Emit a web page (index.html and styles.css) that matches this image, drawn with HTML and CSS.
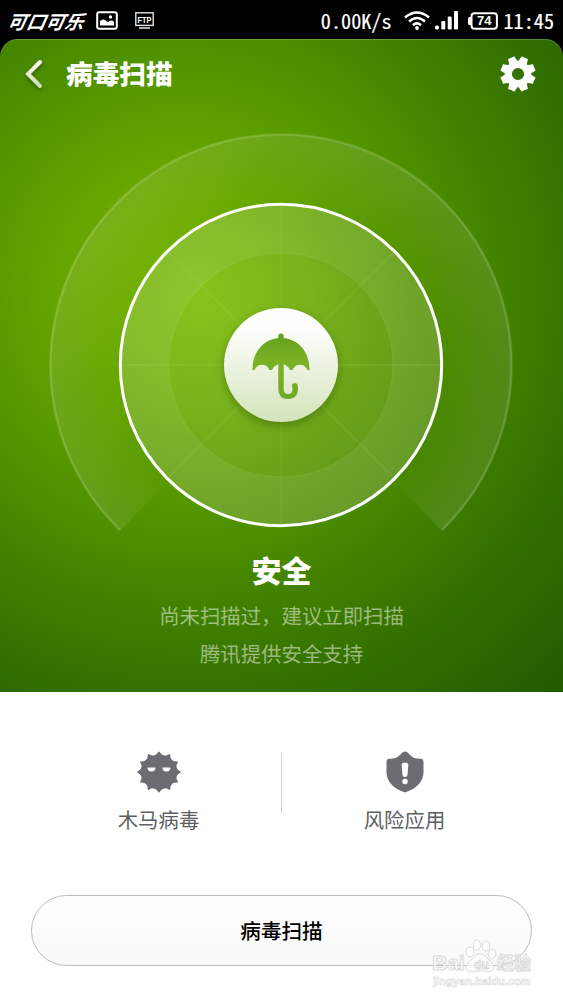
FILE: index.html
```html
<!DOCTYPE html>
<html lang="zh-CN">
<head>
  <meta charset="utf-8">
  <title>病毒扫描</title>
  <link rel="stylesheet" href="styles.css">
</head>
<body>
<div class="statusbar">
  <span class="carrier">可口可乐</span>
  <svg class="icon-photo" width="22" height="19" viewBox="0 0 22 19">
    <rect x="1.2" y="1.2" width="19.6" height="16.6" rx="2" fill="none" stroke="#fff" stroke-width="2"/>
    <path d="M4 14.500V10Q6.500 7.500 9 9Q11 11.500 13 10.500Q16 8.500 18 11V14.500Z" fill="#fff"/>
    <circle cx="14.500" cy="6" r="1.700" fill="#fff"/>
  </svg>
  <svg class="icon-ftp" width="19" height="18" viewBox="0 0 19 18">
    <rect x=".8" y=".8" width="17.400" height="12.600" fill="none" stroke="#e4e4e4" stroke-width="1.400"/>
    <rect x="4" y="15" width="11" height="2" fill="#aaa"/>
    <text x="9.500" y="10.700" text-anchor="middle" textLength="14" lengthAdjust="spacingAndGlyphs" class="ftp-text">FTP</text>
  </svg>
  <div class="status-right">
    <span class="mono">0.00K/s</span>
    <svg class="icon-wifi" width="26" height="19" viewBox="0 0 26 19">
      <g fill="none" stroke="#fff" stroke-width="2.500">
        <path d="M1 6.500Q13-3.500 25 6.500"/>
        <path d="M5 10.500Q13 3.500 21 10.500"/>
        <path d="M9 14.200Q13 10.600 17 14.200"/>
      </g>
      <circle cx="13" cy="17" r="1.900" fill="#fff"/>
    </svg>
    <svg class="icon-signal" width="23" height="19" viewBox="0 0 23 19" fill="#fff">
      <rect x="0" y="14.500" width="4" height="4" rx="1.500"/>
      <rect x="6.300" y="10" width="4" height="8.500" rx="1.300"/>
      <rect x="12.700" y="5.500" width="4" height="13" rx="1.300"/>
      <rect x="19" y="0" width="4" height="18.500" rx="1.300"/>
    </svg>
    <svg class="icon-battery" width="30" height="18" viewBox="0 0 30 18">
      <rect x="3.500" y="1.200" width="25.400" height="15.600" rx="3" fill="none" stroke="#fff" stroke-width="2"/>
      <rect x="0" y="5" width="4" height="8" rx="1.500" fill="#fff"/>
      <text x="16.200" y="13.400" text-anchor="middle" textLength="14.500" lengthAdjust="spacingAndGlyphs" class="battery-text">74</text>
    </svg>
    <span class="mono">11:45</span>
  </div>
</div>

<div class="hero">
  <div class="titlebar">
    <svg class="icon-back" width="20" height="32" viewBox="0 0 20 32">
      <defs>
        <linearGradient id="backFill" x1="0" y1="0" x2="0" y2="1">
          <stop offset="0" stop-color="#fff"/>
          <stop offset="1" stop-color="#c9dbb8"/>
        </linearGradient>
      </defs>
      <path d="M17 4L5 16L17 28" fill="none" stroke="url(#backFill)" stroke-width="4" stroke-linecap="round"/>
    </svg>
    <h1>病毒扫描</h1>
    <svg class="icon-gear" width="36" height="36" viewBox="-18 -18 36 36">
      <defs>
        <path id="tooth" d="M-6-10L-4.300-13L-3.500-17.200Q-3.300-17.800-2.700-17.700Q0-17 2.700-17.700Q3.300-17.800 3.500-17.200L4.300-13L6-10Z"/>
      </defs>
      <circle r="9.600" fill="none" stroke="#fff" stroke-width="7"/>
      <g fill="#fff">
        <use href="#tooth" transform="rotate(22.500)"/>
        <use href="#tooth" transform="rotate(67.500)"/>
        <use href="#tooth" transform="rotate(112.500)"/>
        <use href="#tooth" transform="rotate(157.500)"/>
        <use href="#tooth" transform="rotate(202.500)"/>
        <use href="#tooth" transform="rotate(247.500)"/>
        <use href="#tooth" transform="rotate(292.500)"/>
        <use href="#tooth" transform="rotate(337.500)"/>
      </g>
    </svg>
  </div>

  <svg class="radar" width="466" height="412" viewBox="-233 -233 466 412">
    <defs>
      <radialGradient id="sweep" gradientUnits="userSpaceOnUse" cx="0" cy="0" r="231">
        <stop offset=".7" stop-color="#fff" stop-opacity="0"/>
        <stop offset="1" stop-color="#fff" stop-opacity=".1"/>
      </radialGradient>
      <radialGradient id="inner" gradientUnits="userSpaceOnUse" cx="-80" cy="-65" r="260">
        <stop offset="0" stop-color="#88c21c"/>
        <stop offset=".4" stop-color="#7ab31b"/>
        <stop offset="1" stop-color="#5c9418"/>
      </radialGradient>
      <linearGradient id="disc" x1="0" y1="0" x2="0" y2="1">
        <stop offset="0" stop-color="#fff"/>
        <stop offset=".2" stop-color="#fcfdfa"/>
        <stop offset="1" stop-color="#d3e4ba"/>
      </linearGradient>
      <linearGradient id="umbrella" x1="0" y1="0" x2="0" y2="1">
        <stop offset="0" stop-color="#65a01f"/>
        <stop offset=".45" stop-color="#7bb124"/>
        <stop offset="1" stop-color="#70a92a"/>
      </linearGradient>
    </defs>
    <!-- outer sweep, open at the bottom -->
    <path d="M-161 166A231 231 0 1 1 161 166L114 116A162 162 0 1 0-114 116Z" fill="url(#sweep)"/>
    <path d="M-161 165A230.500 230.500 0 1 1 161 165" fill="none" stroke="#fff" stroke-opacity=".15" stroke-width="2.600"/>
    <!-- dial -->
    <circle r="161" fill="url(#inner)"/>
    <circle r="136.500" fill="none" stroke="#fff" stroke-opacity=".07" stroke-width="49"/>
    <circle r="112" fill="none" stroke="#fff" stroke-opacity=".08"/>
    <path d="M0-160V160M-160 0H160M-113-113L113 113M113-113L-113 113" stroke="#fff" stroke-opacity=".08" stroke-width="1.300"/>
    <circle r="160.700" fill="none" stroke="#fff" stroke-width="3"/>
    <circle class="disc" r="57" fill="url(#disc)"/>
    <path d="M-28.500 5C-28.500-14-17-25.500-2.700-27V-29Q-2.700-31.500 0-31.500Q2.700-31.500 2.700-29V-27C17-25.500 28.500-14 28.500 5H26.500C24-2 14-2 11.500 5H9Q7 1 2.700-1V24Q2.700 29 7 29Q11.500 29 11.500 24L11 21Q10.500 18.500 13.700 18Q17 18 17 23Q17 34 7 34Q-2.700 34-2.700 24V-1Q-7 1-9 5H-11.500C-14-2-24-2-26.500 5Z" fill="url(#umbrella)"/>
  </svg>

  <h2>安全</h2>
  <p>尚未扫描过，建议立即扫描</p>
  <p>腾讯提供安全支持</p>
</div>

<div class="checks">
  <div class="check">
    <svg width="44" height="42" viewBox="-22 -21 44 42">
      <defs>
        <path id="spike" d="M-5.500-17Q-2-18.500-.7-21.300Q0-22.500 .7-21.300Q2-18.500 5.500-17Z"/>
      </defs>
      <g fill="#6b6d72" transform="scale(1 .94)">
        <circle r="18"/>
        <use href="#spike"/>
        <use href="#spike" transform="rotate(30)"/>
        <use href="#spike" transform="rotate(60)"/>
        <use href="#spike" transform="rotate(90)"/>
        <use href="#spike" transform="rotate(120)"/>
        <use href="#spike" transform="rotate(150)"/>
        <use href="#spike" transform="rotate(180)"/>
        <use href="#spike" transform="rotate(210)"/>
        <use href="#spike" transform="rotate(240)"/>
        <use href="#spike" transform="rotate(270)"/>
        <use href="#spike" transform="rotate(300)"/>
        <use href="#spike" transform="rotate(330)"/>
      </g>
      <path d="M-11.500-4.500H-3.500Q-3.500-.5-7.500-.5Q-11.500-.5-11.500-4.500ZM3.500-4.500H11.500Q11.500-.5 7.500-.5Q3.500-.5 3.500-4.500Z" fill="#fff"/>
    </svg>
    <span>木马病毒</span>
  </div>
  <div class="divider"></div>
  <div class="check">
    <svg width="38" height="42" viewBox="0 0 38 42">
      <path d="M19 .5C21 .5 22 2 24 4C27 7 30 8 35 7.800Q37.500 8 37.500 11V21C37.500 30 31 37.500 19 41.500C7 37.500 .5 30 .5 21V11Q.5 8 3 7.800C8 8 11 7 14 4C16 2 17 .5 19 .5Z" fill="#6b6d72"/>
      <path d="M15.600 14Q15.800 11.500 19 11.500Q22.200 11.500 22.400 14L21.500 24Q21.200 26 19 26Q16.800 26 16.500 24Z" fill="#fff"/>
      <circle cx="19" cy="30.500" r="2.700" fill="#fff"/>
    </svg>
    <span>风险应用</span>
  </div>
</div>

<button class="scan-btn">病毒扫描</button>

<div class="watermark">
  <svg width="108" height="58" viewBox="0 0 108 58">
    <g class="mark">
      <text x="3" y="33" textLength="33" lengthAdjust="spacingAndGlyphs" class="mark-latin">Bai</text>
      <ellipse cx="41" cy="15" rx="3.800" ry="5"/>
      <ellipse cx="48" cy="8" rx="3.800" ry="5"/>
      <ellipse cx="57" cy="9" rx="3.800" ry="5"/>
      <ellipse cx="63" cy="17" rx="3.800" ry="5"/>
      <path d="M51 17C57 17 59 23 63 26C67 30 64 35 59 34.500Q51 33 44 34.500C37 35 35 30 39 26C44 23 45 17 51 17Z"/>
      <text x="45" y="32" textLength="15" lengthAdjust="spacingAndGlyphs" class="mark-du">du</text>
      <text x="68" y="33" textLength="34" lengthAdjust="spacingAndGlyphs" class="mark-cn">经验</text>
      <text x="4" y="48" textLength="98" lengthAdjust="spacingAndGlyphs" class="mark-url">jingyan.baidu.com</text>
    </g>
  </svg>
</div>
</body>
</html>
```
FILE: styles.css
```css
* {
  box-sizing: border-box;
}
body {
  margin: 0;
  height: 1000px;
  overflow: hidden;
  background: linear-gradient(#000 0, #000 80px, #fff 80px);
  font-family: "Noto Sans CJK SC", sans-serif;
}
svg {
  display: block;
  flex: none;
}
.statusbar {
  height: 39px;
  padding: 2px 9px 0 10px;
  display: flex;
  align-items: center;
  color: #fff;
}
.carrier {
  width: 86px;
  font-size: 19px;
  line-height: 20px;
  font-weight: 700;
  white-space: nowrap;
  transform: skewX(-24deg);
}
.icon-ftp {
  margin-left: 17px;
}
.ftp-text {
  font: bold 9.5px "Liberation Sans", sans-serif;
  fill: #fff;
}
.status-right {
  margin-left: auto;
  display: flex;
  align-items: center;
}
.mono {
  font-size: 20.2px;
  line-height: 20px;
  font-feature-settings: "hwid";
  -webkit-text-stroke: 0.2px #fff;
}
.icon-wifi {
  margin-left: 12px;
}
.icon-signal {
  margin-left: 5px;
}
.icon-battery {
  margin: 0 6px 0 10px;
}
.battery-text {
  font: bold 12.5px "Liberation Sans", sans-serif;
  fill: #fff;
}
.hero {
  height: 653px;
  border-radius: 18px 18px 0 0;
  background: radial-gradient(circle at 185px 250px, #78b506 0, #6aa900 100px, #579900 200px, #438300 310px, #316e00 420px, #225900 560px);
  box-shadow: inset 0 1px rgba(255,255,255,0.2);
  text-align: center;
  color: #fff;
}
.titlebar {
  height: 70px;
  padding: 0 27px 0 23px;
  display: flex;
  align-items: center;
}
.icon-back {
  filter: drop-shadow(0 2px 2px rgba(0,0,0,0.35));
}
h1 {
  margin: -2px auto 0 23px;
  font-size: 26.7px;
  line-height: 40px;
  font-weight: 900;
}
.radar {
  margin: 23px 0 0 48px;
}
.disc {
  filter: drop-shadow(0 4px 5px rgba(50,90,0,0.5));
}
h2 {
  margin: 6px 0 8px;
  font-size: 30px;
  line-height: 38px;
  font-weight: 900;
}
.hero p {
  margin: 0;
  font-size: 20.4px;
  line-height: 38px;
  color: rgba(255,255,255,0.5);
}
.checks {
  height: 203px;
  padding: 59px 36px 0;
  display: flex;
}
.check {
  flex: 1;
  display: flex;
  flex-direction: column;
  align-items: center;
  color: #5d5f64;
  font-size: 20.4px;
  line-height: 30px;
}
.check span {
  margin-top: 11px;
}
.divider {
  width: 1px;
  height: 60px;
  margin-top: 2px;
  background: #d0d0d0;
}
.scan-btn {
  display: block;
  width: 501px;
  height: 71px;
  margin: 0 auto;
  padding: 0 0 2px;
  border: 1px solid #bcbcbc;
  border-radius: 36px;
  background: linear-gradient(#fefefe, #f9f9f9);
  font-family: inherit;
  font-size: 20.6px;
  font-weight: 500;
  color: #000;
}
/* sits over the corner of the button */
.watermark {
  position: absolute;
  left: 429px;
  top: 937px;
}
.mark {
  fill: rgba(255,255,255,0.75);
  stroke: #d9d9d9;
  stroke-width: 1px;
}
.mark-latin {
  font: bold 21px "Liberation Sans", sans-serif;
}
.mark-du {
  font: bold 13px "Liberation Sans", sans-serif;
}
.mark-cn {
  font: bold 18px "Noto Sans CJK SC", sans-serif;
}
.mark-url {
  font: bold 11px "Liberation Sans", sans-serif;
  stroke-width: 0.6px;
}
```
